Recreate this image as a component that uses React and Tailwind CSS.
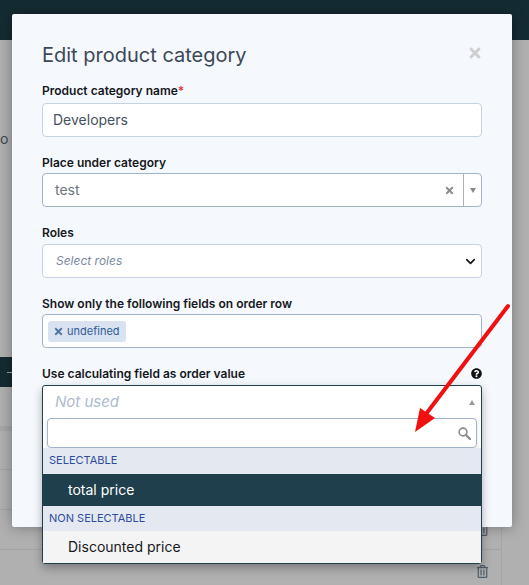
import React from "react";
import { ChevronDown } from "lucide-react";
import { FaTimes, FaQuestionCircle, FaRegTrashAlt } from "react-icons/fa";

const labelClass = "block text-[12px] leading-[14px] font-semibold text-[#16181d]";
const fieldClass = "h-[34px] w-full rounded-[4px] border bg-white";

function Field({ label, required, className, children }) {
  return (
    <div className={className}>
      <label className={labelClass}>
        {label}
        {required && <span className="text-[#d9363e]">*</span>}
      </label>
      {children}
    </div>
  );
}

// Page behind the dimmed backdrop
function BackgroundPage() {
  return (
    <div className="h-[585px] overflow-hidden bg-[#b0b0b0]">
      <div className="h-10 bg-[#152b33]" />
      <div className="h-[545px] w-[502px] border-r border-[#a6a6a6]">
        <div className="pt-[91px] text-[14px] leading-4 text-[#3d4650]">o</div>
        <div className="mt-[210px] flex h-[30px] w-[60px] items-center bg-[#152b33] pl-[7px]">
          <div className="h-px w-[6px] bg-[#9aa5ab]" />
        </div>
        <div className="mt-[39px] h-[5px] bg-[#a6a6a6]" />
        <div className="h-[39px] border-b border-[#a3a3a3]" />
        <div className="h-10 border-b border-[#a3a3a3]" />
        <div className="flex h-10 items-center justify-end border-b border-[#a3a3a3] pr-[12px]">
          <FaRegTrashAlt size={13} className="text-[#4f5d68]" />
        </div>
        <div className="flex h-10 items-center justify-end pr-[12px] pt-[2px]">
          <FaRegTrashAlt size={13} className="text-[#4f5d68]" />
        </div>
      </div>
    </div>
  );
}

export default function App() {
  return (
    <div className="relative h-[585px] w-[529px] overflow-hidden font-['Inter',sans-serif]">
      <BackgroundPage />

      {/* Modal */}
      <div className="absolute left-3 top-[14px] h-[513px] w-[500px] rounded-[2px] bg-[#f5f8fc] px-[30px] pt-[29px] shadow-[0_0_14px_rgba(0,0,0,0.35)]">
        <div className="flex items-start justify-between">
          <h2 className="text-[20px] leading-6 font-normal text-[#3d4858]">Edit product category</h2>
          <FaTimes className="-mr-[1px] mt-[2px] text-[#cfcfcf]" size={16} />
        </div>

        <Field label="Product category name" required className="mt-[17px]">
          <div className={`${fieldClass} mt-[5px] flex items-center border-[#c6d1e6] px-[10px] pb-px text-[14px] text-[#465060]`}>
            Developers
          </div>
        </Field>

        <Field label="Place under category" className="mt-[19px]">
          <div className={`${fieldClass} mt-[3px] flex items-center border-[#a3b3cb] text-[14px] text-[#6b7480]`}>
            <span className="flex-1 pb-px pl-3">test</span>
            <FaTimes className="mr-[8px] text-[#8a8a8a]" size={11} />
            <div className="flex h-full w-[18px] items-center justify-center border-l border-[#a9b3bf]">
              <div className="h-0 w-0 border-x-[3.5px] border-t-[5px] border-x-transparent border-t-[#888888]" />
            </div>
          </div>
        </Field>

        <Field label="Roles" className="mt-[19px]">
          <div className={`${fieldClass} mt-[4px] flex items-center justify-between border-[#c6d1e6] pl-[13px] pr-[3px] text-[12px] italic text-[#7a8aa3]`}>
            Select roles
            <ChevronDown size={15} strokeWidth={2.75} className="text-[#16181d]" />
          </div>
        </Field>

        <Field label="Show only the following fields on order row" className="mt-[19px]">
          <div className={`${fieldClass} mt-[3px] flex items-center border-[#a3b3cb] px-[5px]`}>
            <span className="flex h-[21px] items-center gap-[3px] rounded-[3px] bg-[#d8e2f0] pl-[5px] pr-[6px] text-[11px] text-[#2f5c97]">
              <FaTimes size={11} className="text-[#4f74a6]" />
              undefined
            </span>
          </div>
        </Field>

        {/* Open dropdown hangs past the modal */}
        <div className="relative mt-[19px]">
          <div className="flex items-center justify-between">
            <label className={labelClass}>Use calculating field as order value</label>
            <FaQuestionCircle size={11} className="-mt-[1px] text-[#111111]" />
          </div>
          <div className="absolute left-0 right-0 top-[18px] z-10 h-[179px] rounded-[3px] border border-[#1f3f4c] bg-white shadow-[0_4px_10px_rgba(0,0,0,0.3)]">
            <div className="flex h-[32px] items-center justify-between pl-[12px] pr-[6px] text-[15px] italic text-[#aebccf]">
              Not used
              <div className="h-0 w-0 border-x-[3.5px] border-b-[5px] border-x-transparent border-b-[#999999]" />
            </div>
            <div className="mx-[4px] flex h-[30px] items-center justify-end rounded-[4px] border border-[#a3b3cb] bg-white pr-[5px] shadow-[0_2px_4px_rgba(0,0,0,0.12)]">
              <svg width="13" height="13" viewBox="0 0 13 13" fill="none" stroke="#8c8c8c">
                <circle cx="5" cy="5" r="3.9" strokeWidth="1.6" />
                <path d="M8 8 L12 12" strokeWidth="2.4" strokeLinecap="round" />
              </svg>
            </div>
            <div className="flex h-[26px] items-center bg-[#e4e8f1] pb-px pl-[6px] text-[11px] text-[#2b4d9b]">SELECTABLE</div>
            <div className="flex h-[32px] items-center bg-[#1f3f4c] pb-px pl-[25px] text-[14px] text-white">total price</div>
            <div className="flex h-[25px] items-center bg-[#e4e8f1] pl-[6px] text-[11px] text-[#2b4d9b]">NON SELECTABLE</div>
            <div className="flex h-[32px] items-center bg-[#f4f4f4] pb-px pl-[25px] text-[14px] text-[#16181d]">Discounted price</div>
          </div>
        </div>
      </div>

      {/* Red annotation arrow */}
      <svg className="absolute left-0 top-0 z-20" width="529" height="585" viewBox="0 0 529 585">
        <path d="M508 306 L426 414" stroke="#f01010" strokeWidth="4" strokeLinecap="round" fill="none" />
        <path d="M415 432 L420 408 L435 418 Z" fill="#f01010" />
      </svg>
    </div>
  );
}
